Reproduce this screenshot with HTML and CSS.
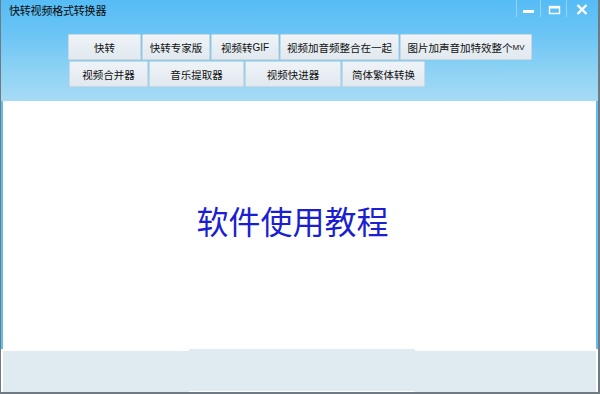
FILE: index.html
```html
<!DOCTYPE html>
<html lang="zh">
<head>
<meta charset="utf-8">
<title>快转视频格式转换器</title>
<link rel="stylesheet" href="styles.css">
</head>
<body>
<div class="window">
  <div class="top">
    <div class="caption">
      <div class="title">快转视频格式转换器</div>
      <div class="controls">
        <div class="ctl min"><svg width="23" height="16" viewBox="0 0 23 16"><rect x="6" y="10" width="11" height="3" fill="#fff"/></svg></div>
        <div class="ctl max"><svg width="25" height="16" viewBox="0 0 25 16"><rect x="8.5" y="6.5" width="10" height="7" fill="none" stroke="#fff" stroke-width="1.4"/><rect x="8" y="6" width="11" height="2.5" fill="#fff"/></svg></div>
        <div class="ctl close"><svg width="27" height="16" viewBox="0 0 27 16"><path d="M10.5 5 L19.5 14 M19.5 5 L10.5 14" stroke="#fff" stroke-width="2.4"/></svg></div>
      </div>
    </div>
    <div class="toolbar">
      <div class="row">
        <div class="btn w73">快转</div>
        <div class="btn w68">快转专家版</div>
        <div class="btn w68">视频转<span class="lat">GIF</span></div>
        <div class="btn w119">视频加音频整合在一起</div>
        <div class="btn w132">图片加声音加特效整个<span class="lat sm">MV</span></div>
      </div>
      <div class="row">
        <div class="btn w78">视频合并器</div>
        <div class="btn w94">音乐提取器</div>
        <div class="btn w96">视频快进器</div>
        <div class="btn w83">简体繁体转换</div>
      </div>
    </div>
  </div>
  <div class="content">
    <div class="tutorial">软件使用教程</div>
  </div>
  <div class="status">
    <div class="seg side-l"></div>
    <div class="seg mid"></div>
    <div class="seg side-r"></div>
  </div>
</div>
</body>
</html>
```
FILE: styles.css
```css
html, body {
  margin: 0;
  padding: 0;
  width: 600px;
  height: 394px;
  overflow: hidden;
  background: #ffffff;
  font-family: "Noto Sans CJK SC", "Noto Sans", sans-serif;
}

.window {
  width: 600px;
  height: 394px;
  box-sizing: border-box;
  border-left: 1px solid #6f7a82;
  border-right: 2px solid #6f7a82;
  border-bottom: 2px solid #6f7a82;
  display: flex;
  flex-direction: column;
  background: #5ebff3;
}

.top {
  height: 101px;
  background: linear-gradient(to bottom, #56bcf5 0%, #6cc5f5 35%, #8ed2f5 70%, #a6dbf4 100%);
  display: flex;
  flex-direction: column;
}

.caption {
  height: 34px;
  display: flex;
  justify-content: space-between;
  align-items: flex-start;
}

.title {
  font-size: 11px;
  line-height: 14px;
  letter-spacing: -0.2px;
  color: #0a0a0a;
  padding: 3px 0 0 8px;
}

.controls {
  display: flex;
  height: 17px;
  margin-right: 4px;
}

.ctl {
  height: 17px;
  border-left: 1px solid rgba(255, 255, 255, 0.35);
  display: flex;
}

.ctl svg { display: block; }

.toolbar {
  display: flex;
  flex-direction: column;
  gap: 1px;
  padding-left: 67px;
}

.row {
  display: flex;
  gap: 1px;
}

.row + .row { padding-left: 1px; }

.btn {
  height: 26px;
  box-sizing: border-box;
  border: 1px solid #cbd8e2;
  border-radius: 1px;
  background: linear-gradient(to bottom, #eef3f7 0%, #e1e9ef 100%);
  font-size: 10.5px;
  color: #111;
  display: flex;
  align-items: center;
  justify-content: center;
  white-space: nowrap;
}

.lat { font-family: "Liberation Sans", "Noto Sans", sans-serif; font-size: 10px; }
.lat.sm { font-size: 8px; }

.w73 { width: 73px; }
.w68 { width: 68px; }
.w119 { width: 119px; }
.w132 { width: 132px; }
.w78 { width: 79px; }
.w94 { width: 95px; }
.w96 { width: 96px; }
.w83 { width: 83px; }

.content {
  flex: 1;
  margin: 0 2px;
  background: #ffffff;
  display: flex;
  align-items: center;
  justify-content: center;
  padding: 0 14px 10px 0;
}

.tutorial {
  font-size: 32px;
  color: #1b1fcf;
}

.status {
  height: 43px;
  display: flex;
  background: #ffffff;
}

.seg { background: #e0eaf1; }

.side-l { width: 186px; margin: 2px 0 0 2px; }
.mid { width: 226px; margin-bottom: 1px; }
.side-r { flex: 1; margin: 2px 2px 0 0; }
```
